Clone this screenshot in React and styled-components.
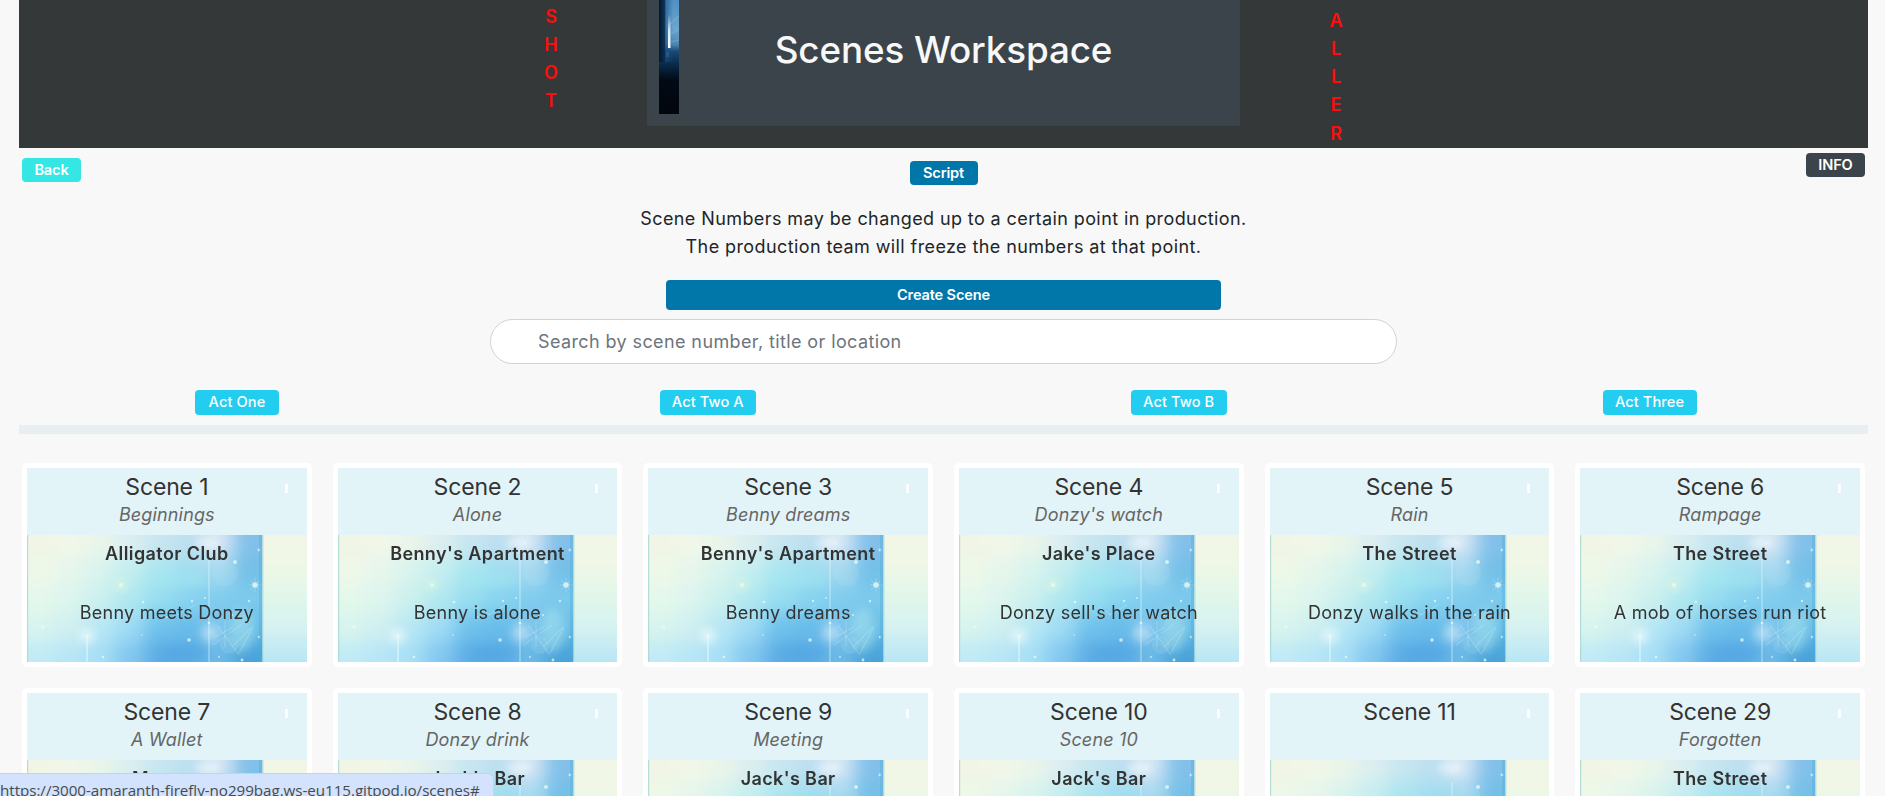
import React from "react";
import styled, { createGlobalStyle } from "styled-components";

const GlobalStyle = createGlobalStyle`
  * { box-sizing: border-box; }
  body {
    margin: 0;
    background: #f8f8f8;
    color: #212529;
    font-family: Inter, "Liberation Sans", sans-serif;
    font-size: 18px;
    line-height: 28px;
    letter-spacing: 0.4px;
    overflow: hidden;
  }
`;

const Page = styled.div`
  height: 796px;
  overflow: hidden;
  display: flex;
  flex-direction: column;
`;

const Header = styled.header`
  flex: none;
  height: 148px;
  margin: 0 17px 0 19px;
  background: #343838;
  display: flex;
  justify-content: center;
  overflow: hidden;
`;

const LetterColumn = styled.div`
  width: 192px;
  padding-top: ${(p) => p.$top}px;
  display: flex;
  flex-direction: column;
  align-items: center;
  color: #ff0d0d;
  font-weight: 600;
  letter-spacing: 0;
  line-height: ${(p) => p.$pitch}px;
`;

const Banner = styled.div`
  width: 593px;
  height: 126px;
  padding-left: 12px;
  background: #3b444b;
  display: flex;
`;

const Title = styled.h1`
  flex: 1;
  margin: 0;
  padding: 28px 32px 0 0;
  color: #f8f8f8;
  font-size: 36.8px;
  font-weight: 500;
  line-height: 44px;
  letter-spacing: -0.1px;
  text-align: center;
`;

const Toolbar = styled.div`
  flex: none;
  height: 57px;
  padding: 0 20px 0 22px;
  display: grid;
  grid-template-columns: 1fr auto 1fr;
  align-items: start;
`;

const Button = styled.button`
  width: ${(p) => p.$width}px;
  height: ${(p) => p.$height || 24}px;
  margin: ${(p) => p.$top || 0}px 0 0;
  padding: 0 0 ${(p) => p.$lift || 0}px;
  border: 0;
  border-radius: 4px;
  background: ${(p) => p.$color};
  color: #fff;
  font-family: inherit;
  font-size: 14.6px;
  font-weight: ${(p) => p.$weight || 600};
  letter-spacing: ${(p) => p.$spacing ?? -0.15}px;
  justify-self: ${(p) => p.$side || "center"};
`;

const Main = styled.section`
  flex: none;
  display: flex;
  flex-direction: column;
  align-items: center;
  padding-left: 2px;
`;

const Note = styled.p`
  margin: 0 0 19px;
  text-align: center;
`;

const Search = styled.input`
  width: 907px;
  height: 45px;
  margin-top: 9px;
  padding: 0 47px;
  border: 1px solid #ced4da;
  border-radius: 23px;
  background: #fff;
  font: inherit;
  letter-spacing: 0.39px;
  &::placeholder { color: #6c757d; opacity: 1; }
`;

const Acts = styled.nav`
  flex: none;
  margin: 26px 0 0 1.5px;
  display: grid;
  grid-template-columns: repeat(4, 1fr);
`;

const Rule = styled.div`
  flex: none;
  height: 9px;
  margin: 10px 17px 29px 19px;
  background: #e8eff1;
`;

const Cards = styled.div`
  flex: none;
  padding: 0 20px 0 22px;
  display: grid;
  grid-template-columns: repeat(6, 1fr);
  grid-auto-rows: 204px;
  gap: 21px;
`;

const Card = styled.article`
  position: relative;
  border: 5px solid #fff;
  border-radius: 5px;
  background: #fff;
  color: #333;
  text-align: center;
`;

const CardHead = styled.div`
  height: 67px;
  padding-top: 5px;
  background: #e3f4f9;
`;

const SceneName = styled.h5`
  margin: 0;
  font-size: 23px;
  font-weight: 400;
  line-height: 28px;
  letter-spacing: -0.15px;
`;

const SceneTitle = styled.div`
  color: #666;
  font-style: italic;
  letter-spacing: 0.15px;
`;

const Menu = styled.div`
  position: absolute;
  top: 16px;
  right: 19px;
  display: grid;
  gap: 0.5px;
`;

const Dot = styled.i`
  width: 3px;
  height: 2.7px;
  border-radius: 1px;
  background: #fff;
`;

const CardBody = styled.div`
  position: relative;
  height: 127px;
  padding-top: 5px;
  overflow: hidden;
`;

const Art = styled.svg`
  position: absolute;
  inset: 0;
  width: 100%;
  height: 100%;
`;

const Location = styled.div`
  position: relative;
  height: 28px;
  font-weight: 600;
`;

const Action = styled.div`
  position: relative;
  margin-top: 31px;
  letter-spacing: 0.25px;
`;

const StatusBar = styled.div`
  position: fixed;
  left: 0;
  bottom: 0;
  width: 494px;
  height: 23px;
  border-top: 1px solid #c6d3e6;
  border-right: 1px solid #c6d3e6;
  border-top-right-radius: 6px;
  background: #d3e3fd;
  color: #474b50;
  font-family: "Open Sans", sans-serif;
  font-size: 15.2px;
  line-height: 33px;
  letter-spacing: -0.05px;
  white-space: nowrap;
  overflow: hidden;
`;

const TILE = [
  "f1f5e6 f1f7e8 eaf5ea dceef0 c8e6f0 bddff0 d5e6f4 82c0ea",
  "eef8e8 e6f6ec d8f4ee c4eef0 aae6f0 a0def0 a4d8f0 74c0e8",
  "e4f8ec dcf5ee ccf0ee b0e8f0 98def0 88d4f0 80ccee 7ccaec",
  "d8f4ee d0f0f0 b8e8f4 a0dcf4 70c2ec 68bcea 7cc4ec 6cc0e8",
  "c0ebf6 b8e6f6 a8dff6 84c8f0 5cade5 5eafe5 6cb9e7 4aa4da",
].map((row) => row.split(" "));

const SPARKS = [
  [208, 27, 2], [228, 50, 2.8], [232, 15, 1.4], [162, 105, 1.8], [116, 67, 1.3],
  [165, 66, 1.2], [76, 122, 1.3], [178, 63, 1], [215, 125, 1.4], [187, 8, 1],
  [182, 88, 1.3], [115, 100, 0.8], [205, 80, 1], [222, 66, 1.2], [192, 122, 0.9],
  [16, 92, 1.8], [94, 50, 2], [140, 82, 0.8], [232, 102, 1.2], [60, 101, 1.8],
];

function SceneArtDefs() {
  return (
    <svg width="0" height="0" style={{ position: "absolute" }}>
      <defs>
        <clipPath id="tile-clip"><rect width="236" height="127" /></clipPath>
        <filter id="wash" x="-20%" y="-20%" width="140%" height="140%" colorInterpolationFilters="sRGB"><feGaussianBlur stdDeviation="9" /></filter>
        <filter id="glow" x="-100%" y="-100%" width="300%" height="300%" colorInterpolationFilters="sRGB"><feGaussianBlur stdDeviation="4" /></filter>
        <filter id="spark" x="-20%" y="-20%" width="140%" height="140%" colorInterpolationFilters="sRGB"><feGaussianBlur stdDeviation="0.6" /></filter>
        <linearGradient id="repeat" x2="0" y2="1">
          <stop offset="0" stopColor="#f1f6e7" />
          <stop offset=".22" stopColor="#f0f7e6" />
          <stop offset=".45" stopColor="#e2f7ea" />
          <stop offset=".72" stopColor="#d6f2f0" />
          <stop offset="1" stopColor="#b8e6f6" />
        </linearGradient>
        <g id="winter-tile" clipPath="url(#tile-clip)">
          <g filter="url(#wash)">
            {TILE.map((row, r) =>
              row.map((c, i) => {
                const x = i === 0 ? -40 : i * 30 - 3;
                const y = r === 0 ? -40 : r * 28 - 6;
                return <rect key={`${r}-${i}`} x={x} y={y} width={i === 0 || i === 7 ? 72 : 31} height={r === 0 || r === 4 ? 64 : 29} fill={`#${c}`} />;
              })
            )}
          </g>
          <g filter="url(#glow)" fill="#fff">
            <ellipse cx="181" cy="8" rx="12" ry="6" opacity=".5" />
            <circle cx="60" cy="101" r="8" opacity=".5" />
            <circle cx="183" cy="98" r="9" opacity=".4" />
            <circle cx="94" cy="50" r="6" fill="#e5f8dc" opacity=".6" />
            <ellipse cx="215" cy="95" rx="12" ry="22" fill="#b4e8ee" opacity=".45" />
            <ellipse cx="150" cy="45" rx="30" ry="6" fill="#9eeaf0" opacity=".4" />
            <ellipse cx="158" cy="118" rx="22" ry="9" fill="#439de0" opacity=".3" />
          </g>
          <circle cx="198" cy="38" r="13" fill="#b9e6f2" opacity=".16" />
          <circle cx="202" cy="110" r="9" fill="#c4e8f2" opacity=".15" />
          <g filter="url(#spark)" stroke="#e5fbfa">
            <path d="M182 22V127" strokeWidth="2" opacity=".3" />
            <path d="M60 101V127" strokeWidth="2" opacity=".5" />
            <path d="M222 50h13M228 43v14M223 45l10 10M233 45l-10 10M188 102l18-10M190 90l22 30M198 86v26M205 112l20-20M186 110l28-20M212 118l14-26M150 80l18-10M140 72l12 8" strokeWidth=".8" opacity=".35" fill="none" />
          </g>
          <g filter="url(#spark)" fill="#eafbf2">
            {SPARKS.map(([x, y, r]) => <circle key={`${x}-${y}`} cx={x} cy={y} r={r} opacity=".75" />)}
          </g>
          <rect width="1.2" height="127" fill="#a9d9d2" opacity=".85" />
          <rect x="232" width="3" height="127" fill="#4ea9d6" opacity=".35" />
        </g>
      </defs>
    </svg>
  );
}

function Poster() {
  return (
    <svg width="20" height="114" viewBox="0 0 20 114">
      <defs>
        <linearGradient id="night" x2="0" y2="1">
          <stop offset="0" stopColor="#4f90c4" />
          <stop offset=".25" stopColor="#6ca5cc" />
          <stop offset=".39" stopColor="#4d86b2" />
          <stop offset=".45" stopColor="#1a4a74" />
          <stop offset=".56" stopColor="#0a2b4b" />
          <stop offset=".7" stopColor="#020a16" />
          <stop offset="1" stopColor="#02060d" />
        </linearGradient>
        <linearGradient id="wall">
          <stop offset="0" stopColor="#04192f" />
          <stop offset=".28" stopColor="#0a2d4f" stopOpacity=".95" />
          <stop offset=".34" stopColor="#164f83" stopOpacity=".6" />
          <stop offset=".7" stopColor="#164f83" stopOpacity="0" />
        </linearGradient>
        <linearGradient id="beam" x2="0" y2="1">
          <stop offset="0" stopColor="#cfe9ff" stopOpacity="0" />
          <stop offset=".5" stopColor="#e5f6ff" stopOpacity=".9" />
          <stop offset="1" stopColor="#fff" />
        </linearGradient>
      </defs>
      <rect width="20" height="114" fill="url(#night)" />
      <rect width="20" height="62" fill="url(#wall)" />
      <path d="M10 25l10-9M12 34l8-5M12 42l8-2" stroke="#8fc2e2" strokeWidth="1.5" opacity=".3" />
      <rect x="9" y="14" width="2.5" height="34" fill="url(#beam)" />
      <rect x="7" y="52" width="3" height="5" fill="#4f7999" opacity=".3" />
    </svg>
  );
}

const SCENES = [
  ["1", "Beginnings", "Alligator Club", "Benny meets Donzy"],
  ["2", "Alone", "Benny's Apartment", "Benny is alone"],
  ["3", "Benny dreams", "Benny's Apartment", "Benny dreams"],
  ["4", "Donzy's watch", "Jake's Place", "Donzy sell's her watch"],
  ["5", "Rain", "The Street", "Donzy walks in the rain"],
  ["6", "Rampage", "The Street", "A mob of horses run riot"],
  ["7", "A Wallet", "Morgue", ""],
  ["8", "Donzy drink", "Jack's Bar", ""],
  ["9", "Meeting", "Jack's Bar", ""],
  ["10", "Scene 10", "Jack's Bar", ""],
  ["11", "", "", ""],
  ["29", "Forgotten", "The Street", ""],
];

const ACTS = [["Act One", 84], ["Act Two A", 96], ["Act Two B", 96], ["Act Three", 94]];

function SceneCard({ scene: [number, title, location, action] }) {
  return (
    <Card>
      <CardHead>
        <SceneName>Scene {number}</SceneName>
        <SceneTitle>{title}</SceneTitle>
      </CardHead>
      <Menu><Dot /><Dot /><Dot /></Menu>
      <CardBody>
        <Art>
          <use href="#winter-tile" />
          <rect x="235.5" width="60" height="127" fill="url(#repeat)" />
          <rect x="235.5" width="1" height="127" fill="#b5dcd4" opacity=".8" />
        </Art>
        <Location>{location}</Location>
        <Action>{action}</Action>
      </CardBody>
    </Card>
  );
}

export default function App() {
  return (
    <Page>
      <GlobalStyle />
      <SceneArtDefs />
      <Header>
        <LetterColumn $top={3} $pitch={28}>
          {[..."SHOT"].map((c, i) => <span key={i}>{c}</span>)}
        </LetterColumn>
        <Banner>
          <Poster />
          <Title>Scenes Workspace</Title>
        </Banner>
        <LetterColumn $top={6.5} $pitch={28.3}>
          {[..."ALLER"].map((c, i) => <span key={i}>{c}</span>)}
        </LetterColumn>
      </Header>
      <Toolbar>
        <Button $width={59} $top={10} $color="#34e7e4" $side="start">Back</Button>
        <Button $width={68} $top={13} $color="#0077a8">Script</Button>
        <Button $width={59} $top={5} $color="#3b444b" $side="end">INFO</Button>
      </Toolbar>
      <Main>
        <Note>
          Scene Numbers may be changed up to a certain point in production.
          <br />
          The production team will freeze the numbers at that point.
        </Note>
        <Button $width={555} $height={30} $color="#0077a8">Create Scene</Button>
        <Search placeholder="Search by scene number, title or location" />
      </Main>
      <Acts>
        {ACTS.map(([label, width]) => (
          <Button key={label} $width={width} $height={25} $lift={2} $weight={500} $spacing={0.1} $color="#22cdf0">{label}</Button>
        ))}
      </Acts>
      <Rule />
      <Cards>
        {SCENES.map((scene) => <SceneCard key={scene[0]} scene={scene} />)}
      </Cards>
      <StatusBar>https://3000-amaranth-firefly-no299bag.ws-eu115.gitpod.io/scenes#</StatusBar>
    </Page>
  );
}
